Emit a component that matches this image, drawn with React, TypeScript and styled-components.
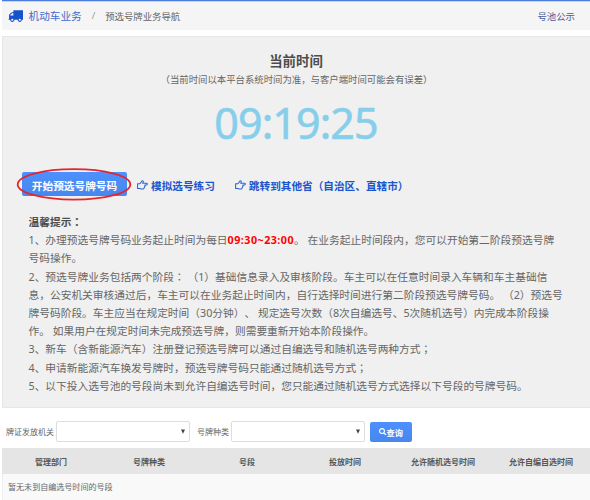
import React from 'react';
import styled, { createGlobalStyle } from 'styled-components';
import { FaSearch } from 'react-icons/fa';

const GlobalStyle = createGlobalStyle`
  * { box-sizing: border-box; }
  body {
    margin: 0;
    background: #fff;
    color: #666;
    font-family: "Noto Sans", "Noto Sans CJK SC", sans-serif;
    text-spacing-trim: space-all;
    overflow: hidden;
  }
`;

const Page = styled.div`
  width: 590px;
  height: 500px;
  padding-left: 2px;
  display: flex;
  flex-direction: column;
  overflow: hidden;
`;

const TopBar = styled.header`
  height: 30px;
  flex: none;
  display: flex;
  align-items: center;
  padding: 0 15px 0 6px;
  border-top: 1px solid #4b7bdc;
  box-shadow: inset 0 1px 0 #c5d4f2;
  background: #f5f5f5;
  font-size: 9.4px;
`;

const Module = styled.span`
  margin-left: 5.5px;
  font-size: 10.65px;
  color: #4169c8;
`;

const Slash = styled.span`
  width: 23.5px;
  text-align: center;
  color: #999;
`;

const PoolLink = styled.a`
  margin-left: auto;
  color: #4a5a9c;
`;

const Panel = styled.main`
  height: 372px;
  flex: none;
  margin-top: 6px;
  border: 1px solid #e6e6e6;
  border-right: 0;
  background: #f0f0f0;
`;

const Title = styled.h1`
  margin: 15px 1px 0 0;
  font-size: 13.4px;
  line-height: 18px;
  font-weight: 700;
  text-align: center;
  color: #4d4d4d;
`;

const Subtitle = styled.p`
  margin: 3px 0 0;
  font-size: 9.4px;
  line-height: 14px;
  text-align: center;
`;

const Clock = styled.div`
  margin: 8px 1px 0 0;
  height: 56px;
  line-height: 56px;
  font-size: 43px;
  font-weight: 400;
  letter-spacing: -0.9px;
  text-align: center;
  color: #87ceeb;
  -webkit-text-stroke: 0.6px #87ceeb;
`;

const Actions = styled.div`
  display: flex;
  align-items: center;
  height: 24px;
  margin: 21px 0 0 19px;
`;

const StartWrap = styled.div`
  position: relative;
  width: 105px;
  height: 24px;
`;

const StartButton = styled.button`
  width: 100%;
  height: 100%;
  padding: 3px 0 0;
  border: 0;
  border-radius: 2px;
  background: linear-gradient(#4d90fe, #4787ed);
  color: #fff;
  font: inherit;
  font-size: 10.67px;
  font-weight: 700;
`;

const Highlight = styled.svg`
  position: absolute;
  left: -6px;
  top: -4px;
`;

const ActionLink = styled.a<{ $gap: number }>`
  display: flex;
  align-items: center;
  gap: 3px;
  margin-left: ${(p) => p.$gap}px;
  padding-top: 2px;
  font-size: 10.65px;
  font-weight: 700;
  color: #1a55cc;
  white-space: nowrap;
`;

const Tips = styled.section`
  margin: 17px 0 0 25.5px;
  font-size: 10.72px;
  line-height: 18.2px;
`;

const TipsTitle = styled.div`
  font-weight: 700;
  color: #4d4d4d;
`;

const Line = styled.div`
  white-space: nowrap;
`;

const CenteredMark = styled.span`
  font-family: "Noto Sans CJK TC", sans-serif;
  line-height: 0;
`;

const Hours = styled.strong`
  color: #f00;
  letter-spacing: 0.48px;
`;

const Filters = styled.form`
  height: 40px;
  flex: none;
  display: flex;
  align-items: center;
  padding: 7px 0 0 4px;
  font-size: 8px;
`;

const Label = styled.label<{ $w: number }>`
  width: ${(p) => p.$w}px;
  padding-bottom: 1px;
  white-space: nowrap;
`;

const SelectBox = styled.div`
  width: 134px;
  height: 21px;
  display: flex;
  align-items: center;
  justify-content: flex-end;
  padding-right: 4px;
  border: 1px solid #ddd;
  border-radius: 2px;
  background: #fff;
`;

const Spacer = styled.span`
  width: 7px;
`;

const QueryButton = styled.button`
  width: 42px;
  height: 20px;
  margin-left: 5px;
  padding: 0;
  display: flex;
  align-items: center;
  justify-content: center;
  border: 0;
  border-radius: 2px;
  background: linear-gradient(#4d90fe, #4787ed);
  color: #fff;
  font: inherit;
  font-size: 8.2px;
  font-weight: 700;
`;

const HeadRow = styled.div`
  height: 26px;
  flex: none;
  display: grid;
  grid-template-columns: repeat(6, 98px);
  align-items: center;
  background: #e5e5e5;
  font-size: 8px;
  font-weight: 700;
  text-align: center;
  color: #555;
`;

const EmptyRow = styled.div`
  height: 26px;
  flex: none;
  padding: 1px 5px 0;
  border-left: 1px solid #eee;
  background: #f9f9f9;
  font-size: 8.05px;
  line-height: 24px;
`;

const TruckIcon = () => (
  <svg width="15" height="15" viewBox="0 0 1792 1792" fill="#1652cc">
    <path d="M640 1408q0-52-38-90t-90-38-90 38-38 90 38 90 90 38 90-38 38-90zm-384-512h384v-256h-158q-13 0-22 9l-195 195q-9 9-9 22v30zm1280 512q0-52-38-90t-90-38-90 38-38 90 38 90 90 38 90-38 38-90zm256-1088v1024q0 15-4 26.5t-13.5 18.5-16.5 11.5-23.5 6-22.5 2-25.5 0-22.5-.5q0 106-75 181t-181 75-181-75-75-181h-384q0 106-75 181t-181 75-181-75-75-181h-64q-3 0-22.5.5t-25.5 0-22.5-2-23.5-6-16.5-11.5-13.5-18.5-4-26.5q0-26 19-45t45-19v-320q0-8-.5-35t0-38 2.5-34.5 6.5-37 14-30.5 22.5-30l198-198q19-19 50.5-32t58.5-13h160v-192q0-26 19-45t45-19h1024q26 0 45 19t19 45z" />
  </svg>
);

const HandIcon = () => (
  <svg width="11" height="10" viewBox="0 0 11 10" fill="none" stroke="#2a62d0" strokeWidth="1.05" strokeLinejoin="round">
    <path d="M.6 3.7H2.8C4 3.4 4.3 1.4 5.1.8C6 .5 6.5 1.2 6.2 2L5.7 3.3H9.5C10.6 3.3 10.6 4.9 9.5 4.9H7.8C8.2 5.5 8 6.2 7.6 6.5C7.7 7.2 7.4 7.7 7 7.9C7 8.7 6.5 9 5.9 9H4.7C3.9 9 3.4 8.4 2.7 8.4H.6Z" />
  </svg>
);

const Select = () => (
  <SelectBox>
    <svg width="4" height="5" viewBox="0 0 4 5" fill="#444">
      <path d="M0 .5H4L2 4.7Z" />
    </svg>
  </SelectBox>
);

// Sets colons and semicolons in the middle of their full-width cell.
const Marked = ({ text }: { text: string }) => (
  <>
    {text.split(/([：；])/).map((part, i) =>
      i % 2 ? <CenteredMark key={i} lang="zh-TW">{part}</CenteredMark> : part,
    )}
  </>
);

const columns = ['管理部门', '号牌种类', '号段', '投放时间', '允许随机选号时间', '允许自编自选时间'];

const tips = [
  '号码操作。',
  '2、预选号牌业务包括两个阶段： （1）基础信息录入及审核阶段。车主可以在任意时间录入车辆和车主基础信',
  '息，公安机关审核通过后，车主可以在业务起止时间内，自行选择时间进行第二阶段预选号牌号码。 （2）预选号',
  '牌号码阶段。车主应当在规定时间（30分钟）、 规定选号次数（8次自编选号、5次随机选号）内完成本阶段操',
  '作。 如果用户在规定时间未完成预选号牌，则需要重新开始本阶段操作。',
  '3、新车（含新能源汽车）注册登记预选号牌可以通过自编选号和随机选号两种方式；',
  '4、申请新能源汽车换发号牌时，预选号牌号码只能通过随机选号方式；',
  '5、以下投入选号池的号段尚未到允许自编选号时间，您只能通过随机选号方式选择以下号段的号牌号码。',
];

export default function App() {
  return (
    <Page>
      <GlobalStyle />
      <TopBar>
        <TruckIcon />
        <Module>机动车业务</Module>
        <Slash>/</Slash>
        <span>预选号牌业务导航</span>
        <PoolLink>号池公示</PoolLink>
      </TopBar>
      <Panel>
        <Title>当前时间</Title>
        <Subtitle>（当前时间以本平台系统时间为准，与客户端时间可能会有误差）</Subtitle>
        <Clock>09:19:25</Clock>
        <Actions>
          <StartWrap>
            <StartButton>开始预选号牌号码</StartButton>
            <Highlight width="116" height="33" viewBox="0 0 116 33">
              <ellipse cx="58" cy="16.4" rx="56.3" ry="15.2" fill="none" stroke="#e3262e" strokeWidth="1.8" />
            </Highlight>
          </StartWrap>
          <ActionLink $gap={10}><HandIcon />模拟选号练习</ActionLink>
          <ActionLink $gap={20}><HandIcon />跳转到其他省（自治区、直辖市）</ActionLink>
        </Actions>
        <Tips>
          <TipsTitle><Marked text="温馨提示：" /></TipsTitle>
          <Line>
            1、办理预选号牌号码业务起止时间为每日<Hours>09:30~23:00</Hours>。 在业务起止时间段内，您可以开始第二阶段预选号牌
          </Line>
          {tips.map((t) => (
            <Line key={t}><Marked text={t} /></Line>
          ))}
        </Tips>
      </Panel>
      <Filters>
        <Label $w={50}>牌证发放机关</Label>
        <Select />
        <Spacer />
        <Label $w={34}>号牌种类</Label>
        <Select />
        <QueryButton type="button"><FaSearch size={7.5} />查询</QueryButton>
      </Filters>
      <HeadRow>
        {columns.map((c) => (
          <span key={c}>{c}</span>
        ))}
      </HeadRow>
      <EmptyRow>暂无未到自编选号时间的号段</EmptyRow>
    </Page>
  );
}
